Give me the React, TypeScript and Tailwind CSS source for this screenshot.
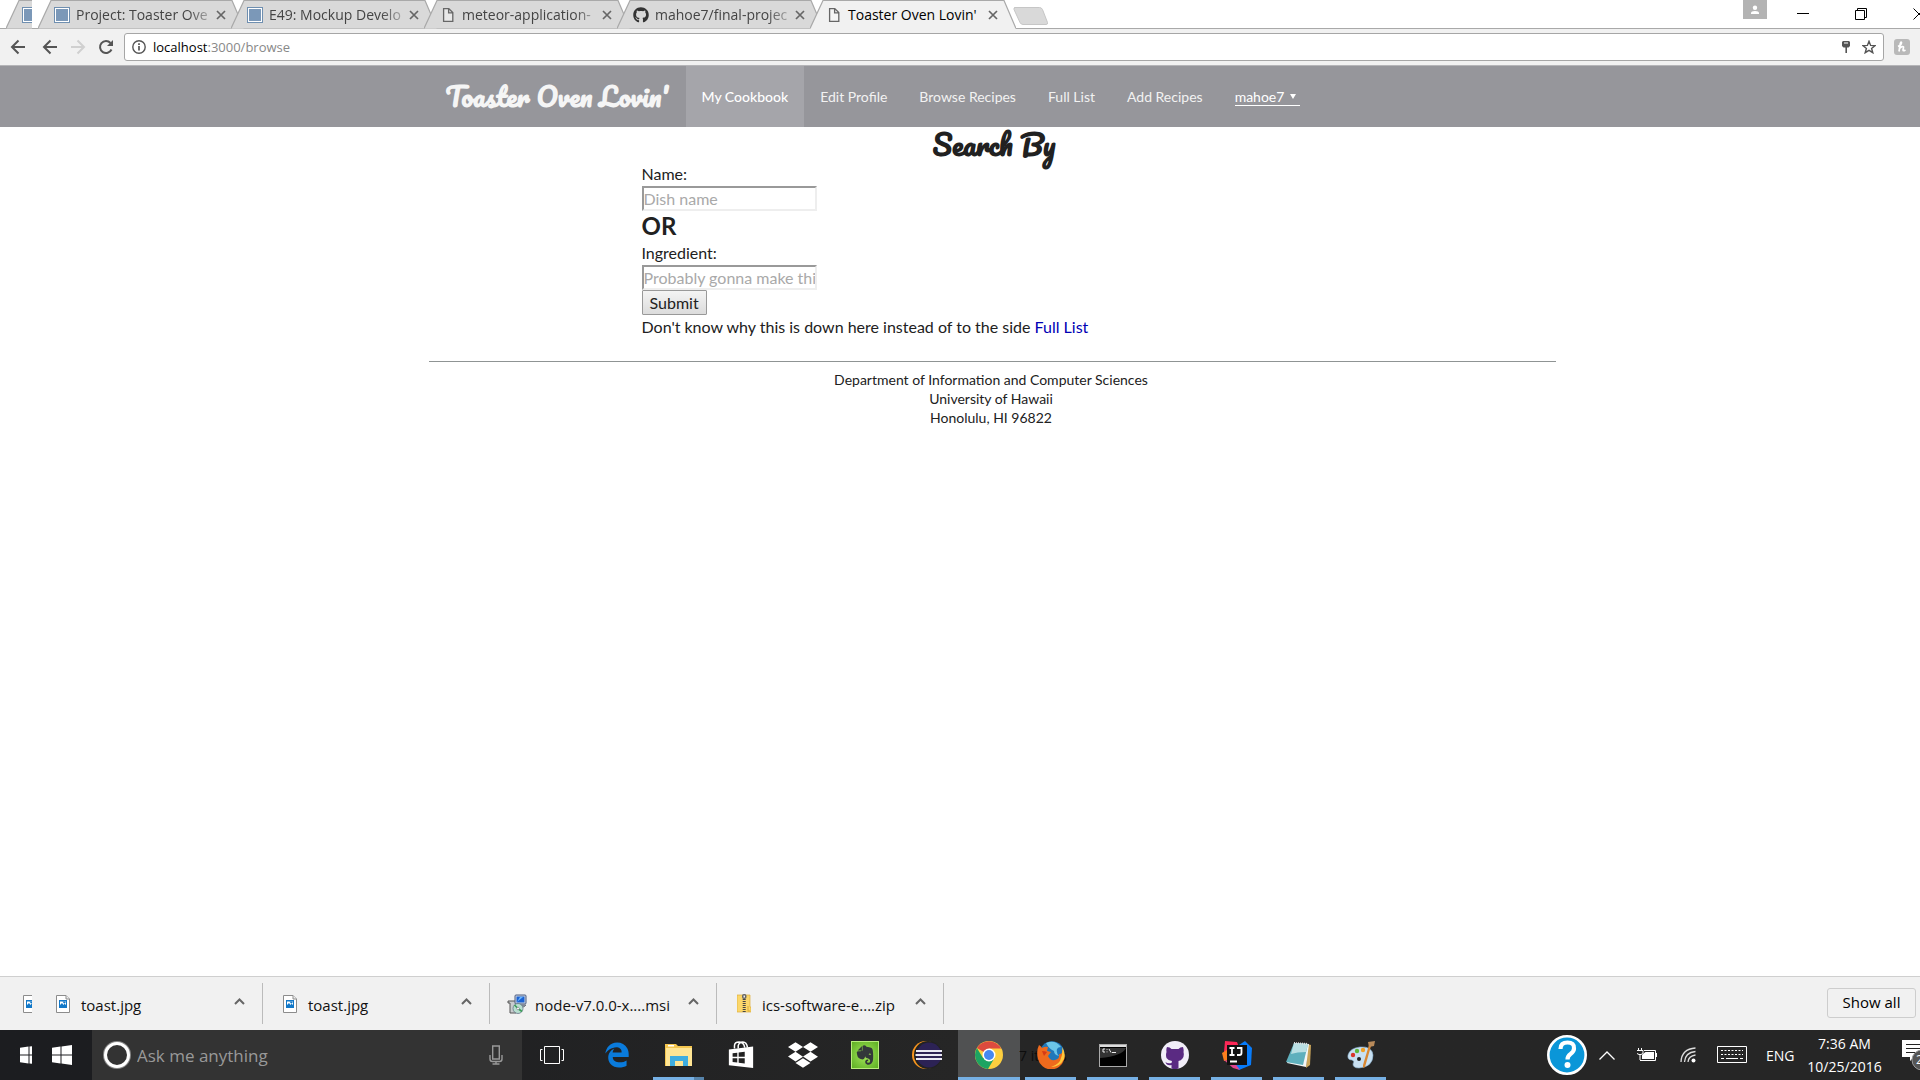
import React from "react";
import { FaGithub, FaDropbox, FaEdgeLegacy, FaEvernote } from "react-icons/fa";

const ui = "font-['Segoe_UI','Open_Sans',sans-serif]";

function SquareIcon() {
  return (
    <svg className="size-4 shrink-0" viewBox="0 0 16 16">
      <rect x=".5" y=".5" width="15" height="15" fill="#fff" stroke="#6f8fb0" />
      <rect x="2" y="2" width="12" height="12" fill="#7b98b8" />
    </svg>
  );
}

function PageIcon() {
  return (
    <svg className="size-4 shrink-0" viewBox="0 0 16 16" fill="#fff" fillOpacity=".4" stroke="#666" strokeWidth="1.3">
      <path d="M3.6 1.6h5.2l4 4v8.8H3.6zM8.6 1.8v4h4" />
    </svg>
  );
}

function TabShape({ active }: { active?: boolean }) {
  return (
    <svg className="absolute inset-0 size-full" viewBox="0 0 206 29" preserveAspectRatio="none">
      <path
        d={active ? "M0 28.5L13 .5H194L206 28.5V29H0z" : "M0 28.5L13 .5H194L206 28.5z"}
        fill={active ? "#f1f1f1" : "#d9d9d9"}
      />
      <path d="M0 28.5L13 .5H194L206 28.5" fill="none" stroke="#a9a9a9" strokeWidth="1.2" />
    </svg>
  );
}

function Tab({ icon, title, active }: { icon: React.ReactNode; title: string; active?: boolean }) {
  return (
    <div className={`relative -mr-[13px] h-[29px] w-[206px] shrink-0 ${active ? "z-10" : ""}`}>
      <TabShape active={active} />
      <div className="relative flex h-full items-center pr-[18px] pl-4">
        {icon}
        <button
          className={`ml-[6px] flex-1 text-left text-[14px] leading-5 whitespace-nowrap ${
            active ? "text-black" : "text-[#444] [mask-image:linear-gradient(to_right,#000_80%,transparent_102%)]"
          }`}
        >
          {title}
        </button>
        <button aria-label="Close tab" className="shrink-0">
          <svg className="size-[10px]" viewBox="0 0 10 10" stroke="#666" strokeWidth="1.7">
            <path d="M1 1l8 8M9 1L1 9" />
          </svg>
        </button>
      </div>
    </div>
  );
}

function Arrow({ color, flip }: { color: string; flip?: boolean }) {
  return (
    <svg className={`size-4 ${flip ? "rotate-180" : ""}`} viewBox="0 0 16 16" fill="none" stroke={color} strokeWidth="2">
      <path d="M15 8H2.5M8.5 1.5L2 8l6.5 6.5" />
    </svg>
  );
}

function BrowserTop() {
  return (
    <header className={`${ui} shrink-0`}>
      <div className="relative flex h-[29px] items-start overflow-hidden bg-white">
        <div className="absolute inset-x-0 bottom-0 h-px bg-[#a9a9a9]" />
        <div className="relative mr-[6px] ml-[6px] h-[29px] w-[26px] shrink-0 overflow-hidden">
          <div className="relative h-full w-[206px]">
            <TabShape />
            <div className="relative flex h-full items-center pl-4"><SquareIcon /></div>
          </div>
        </div>
        <Tab icon={<SquareIcon />} title="Project: Toaster Ove" />
        <Tab icon={<SquareIcon />} title="E49: Mockup Develo" />
        <Tab icon={<PageIcon />} title="meteor-application-" />
        <Tab icon={<FaGithub className="size-4 shrink-0 text-[#333]" />} title="mahoe7/final-projec" />
        <Tab icon={<PageIcon />} title="Toaster Oven Lovin'" active />
        <button aria-label="New tab" className="mt-[7px] ml-[10px]">
          <svg className="h-[18px] w-[36px]" viewBox="0 0 36 18">
            <path d="M1.500.5h25q2 0 3 2l5 13q.5 2-1.500 2H10q-2 0-3-2L1 2.500Q.5.500 2.500.500z" fill="#d9d9d9" stroke="#c6c6c6" />
          </svg>
        </button>
        <div className="ml-auto flex shrink-0 items-start">
          <button aria-label="Profile" className="mr-[30px] flex h-[19px] w-6 items-center justify-center bg-[#b3b3b3]">
            <svg className="h-[10px] w-[10px]" viewBox="0 0 10 10" fill="#fff">
              <circle cx="5" cy="2.800" r="2.200" />
              <path d="M1 9V8q0-2 4-2t4 2v1z" />
            </svg>
          </button>
          <button aria-label="Minimize" className="mt-[8px] mr-[46px]">
            <svg className="size-3" viewBox="0 0 12 12" stroke="#000"><path d="M0 5.500h12" /></svg>
          </button>
          <button aria-label="Restore" className="mt-[8px] mr-[46px]">
            <svg className="size-3" viewBox="0 0 12 12" fill="none" stroke="#000">
              <path d="M.5 2.500h9v9h-9zM2.500 2.500v-2h9v9h-2" />
            </svg>
          </button>
          <button aria-label="Close window" className="mt-[8px] -mr-[5px]">
            <svg className="size-3" viewBox="0 0 12 12" stroke="#000"><path d="M.5.5l11 11M11.500.5l-11 11" /></svg>
          </button>
        </div>
      </div>
      <div className="flex h-[37px] items-center border-b border-[#b5b5b8] bg-[#f1f1f1] pr-[10px] pl-[10px]">
        <button aria-label="Back"><Arrow color="#555" /></button>
        <button aria-label="Go back" className="ml-4"><Arrow color="#555" /></button>
        <button aria-label="Forward" className="ml-3"><Arrow color="#d0d0d0" flip /></button>
        <button aria-label="Reload" className="mr-[10px] ml-3">
          <svg className="size-4" viewBox="0 0 16 16" fill="none" stroke="#555" strokeWidth="2">
            <path d="M13.500 10.500A6 6 0 1 1 12.500 4" />
            <path d="M15 1v6H9z" fill="#555" stroke="none" />
          </svg>
        </button>
        <div className="flex h-7 flex-1 items-center rounded-[3px] border border-[#a6a6a6] bg-white pr-[7px] pl-[7px]">
          <svg className="size-[14px]" viewBox="0 0 14 14" fill="none" stroke="#555" strokeWidth="1.4">
            <circle cx="7" cy="7" r="6.200" />
            <path d="M7 6v4.500M7 3.300v1.600" strokeWidth="1.700" />
          </svg>
          <div className="ml-[7px] flex-1 text-[13px] leading-5 text-[#888]">
            <span className="text-black">localhost</span>:3000/browse
          </div>
          <svg className="mr-3 h-3 w-2" viewBox="0 0 8 12" fill="#555">
            <path d="M1 0h6l1 1v4L6.500 6.500H5V12H3.400V6.500H1.500L0 5V1zM2 1.500v1h4v-1z" fillRule="evenodd" />
          </svg>
          <button aria-label="Bookmark">
            <svg className="size-[14px]" viewBox="0 0 14 14" fill="none" stroke="#555" strokeWidth="1.400">
              <path d="M7 1.300l1.600 4.100 4.400.2-3.400 2.800 1.200 4.300L7 10.300l-3.800 2.400 1.200-4.300L1 5.600l4.400-.2z" />
            </svg>
          </button>
        </div>
        <button aria-label="Extension" className="ml-[10px]">
          <svg className="size-4" viewBox="0 0 16 16">
            <rect width="16" height="16" rx="3" fill="#b9b9b9" />
            <path d="M4 7.500Q7.500 6 7.500 3.500 7 2.300 6.300 4.500L5 12.500M5.600 9.500Q8.500 6.500 9.500 8 9.500 9 9 11q0 1.500 2.500 0" fill="none" stroke="#fff" strokeWidth="1.700" />
          </svg>
        </button>
      </div>
    </header>
  );
}

const navLinks = ["Edit Profile", "Browse Recipes", "Full List", "Add Recipes"];

function PageContent() {
  return (
    <main className="flex-1 overflow-hidden bg-white font-[Lato,sans-serif] text-[#212121]">
      <nav className="flex h-[61px] justify-center bg-[#96969b] pl-16 text-[14px] text-[#f2f2f2]">
        <div className="flex w-full max-w-[1125px] items-stretch">
          <a href="#home" className="flex w-64 items-center px-4 font-[Pacifico,Lato,cursive] text-[26px] font-bold whitespace-nowrap text-[#f5f5f5]">
            Toaster Oven Lovin'
          </a>
          <a href="#cookbook" className="flex items-center bg-[#a5a5aa] px-4 font-medium text-white">My Cookbook</a>
          {navLinks.map((l) => (
            <a key={l} href="#nav" className="flex items-center px-4">{l}</a>
          ))}
          <button className="flex items-center px-4 text-white">
            <span className="flex items-center border-y border-t-transparent border-b-white leading-4">
              mahoe7
              <svg className="mr-1 ml-[6px] h-[5px] w-[6px]" viewBox="0 0 6 5" fill="#fff"><path d="M0 0h6L3 5z" /></svg>
            </span>
          </button>
        </div>
      </nav>
      <div className="flex justify-center pl-16">
        <div className="w-full max-w-[1127px]">
          <div className="px-[213px]">
            <h1 className="flex h-9 items-center justify-center pl-1 font-[Pacifico,Lato,cursive] text-[28px] font-bold">Search By</h1>
            <form className="flex flex-col items-start text-[16px] leading-[22px]" onSubmit={(e) => e.preventDefault()}>
              <label htmlFor="dish" className="h-[23px]">Name:</label>
              <input
                id="dish"
                placeholder="Dish name"
                className="h-[25px] w-[175px] border-2 border-t-[#999] border-r-[#eee] border-b-[#eee] border-l-[#999] placeholder:text-[#a9a9a9]"
              />
              <h2 className="h-[31px] text-[24px] leading-[29px] font-bold">OR</h2>
              <label htmlFor="ingredient" className="h-[23px]">Ingredient:</label>
              <input
                id="ingredient"
                placeholder="Probably gonna make thi"
                className="h-[25px] w-[175px] border-2 border-t-[#999] border-r-[#eee] border-b-[#eee] border-l-[#999] placeholder:text-[#a9a9a9]"
              />
              <button className="h-[25px] rounded-[1px] border border-[#999] bg-linear-to-b from-[#f4f4f4] to-[#dcdcdc] px-[7px]">Submit</button>
            </form>
            <p className="pb-[2px] text-[16px] leading-[23px]">
              Don't know why this is down here instead of to the side{" "}
              <a href="#list" className="text-[#0000b4]">Full List</a>
            </p>
          </div>
          <footer className="mt-[21px] border-t border-[#8f9494] pt-2 pr-[2px] text-center text-[14px] leading-[19px]">
            <p>Department of Information and Computer Sciences</p>
            <p>University of Hawaii</p>
            <p>Honolulu, HI 96822</p>
          </footer>
        </div>
      </div>
    </main>
  );
}

function ImageFile() {
  return (
    <svg className="h-[18px] w-[14px] shrink-0" viewBox="0 0 14 18">
      <path d="M.5.5h9.500l3.500 3.500v13.500H.5z" fill="#fff" stroke="#8c8c8c" />
      <path d="M10 .5V4h3.500" fill="#eee" stroke="#8c8c8c" />
      <rect x="3" y="5" width="8" height="8" fill="#1278c8" />
      <path d="M4 6.500h6v3.500l-1.500-1.500-1 1.500L6 8l-2 2z" fill="#fff" />
      <path d="M6.500 6.500h3v1.500l-1.500.5z" fill="#1278c8" />
    </svg>
  );
}

function InstallerIcon() {
  return (
    <svg className="size-5 shrink-0" viewBox="0 0 20 20">
      <path d="M1 7h8v12H3V9H1z" fill="#c9ccce" stroke="#555" />
      <rect x="8" y="1" width="11" height="9" rx="1" fill="#cfd6df" stroke="#4a5a80" />
      <rect x="9.500" y="2.500" width="8" height="6" fill="#1b62d4" />
      <path d="M10 8l3-5h3z" fill="#69b7ff" />
      <path d="M11 11h8l-2 2h-6z" fill="#9aa2ab" stroke="#4b5260" strokeWidth=".6" />
      <circle cx="11" cy="14.500" r="5" fill="#b8dfd0" stroke="#678" strokeWidth=".8" />
      <path d="M11 14.500l4 3M11 14.500L7.500 11" stroke="#3c9c58" strokeWidth="1.600" />
      <circle cx="11" cy="14.500" r="1.300" fill="#fff" stroke="#667" strokeWidth=".5" />
    </svg>
  );
}

function ZipIcon() {
  return (
    <svg className="h-[19px] w-[14px] shrink-0" viewBox="0 0 14 19">
      <path d="M0 1h13v12h1v5H0z" fill="#fbd76b" stroke="#dcae3b" strokeWidth=".7" />
      <rect x="5" width="4.500" height="5" rx="2" fill="#666" />
      <rect x="6.500" y="1.500" width="1.500" height="2" fill="#eee" />
      <path d="M7.200 5v13" stroke="#444" strokeWidth="3" strokeDasharray="1 1" />
      <path d="M11 12v5h2" fill="none" stroke="#dcae3b" />
    </svg>
  );
}

const downloads = [
  { name: "toast.jpg", icon: <ImageFile /> },
  { name: "toast.jpg", icon: <ImageFile /> },
  { name: "node-v7.0.0-x....msi", icon: <InstallerIcon /> },
  { name: "ics-software-e....zip", icon: <ZipIcon /> },
];

function DownloadShelf() {
  return (
    <section className={`${ui} flex h-[54px] shrink-0 items-center border-t border-[#cfcfcf] bg-[#f1f1f1] pr-1 pl-[23px]`}>
      <div className="w-[9px] overflow-hidden"><ImageFile /></div>
      <div className="flex h-[41px] pl-1">
        {downloads.map((d, i) => (
          <div key={i} className="flex w-[227px] items-center border-r border-[#bbb] pr-[17px] pl-[13px]">
            <div className="flex w-7 shrink-0 justify-center">{d.icon}</div>
            <button className="ml-1 flex-1 pt-[3px] text-left text-[15px] leading-6 whitespace-nowrap text-[#111]">{d.name}</button>
            <button aria-label={`Options for ${d.name}`} className="mb-1 w-[11px] shrink-0">
              <svg className="h-[7px] w-[11px]" viewBox="0 0 11 7" fill="none" stroke="#666" strokeWidth="2"><path d="M1 6l4.500-4.500L10 6" /></svg>
            </button>
          </div>
        ))}
      </div>
      <button className="mb-[2px] ml-auto h-[30px] w-[89px] rounded-[3px] border border-[#cdcdcd] text-[15px] text-black">Show all</button>
    </section>
  );
}

function WindowsLogo() {
  return (
    <svg className="size-5 shrink-0" viewBox="0 0 20 20" fill="#fff">
      <path d="M0 2.800L8.500 1.600V9.500H0zM9.500 1.500L20 0v9.500H9.500zM0 10.500h8.500v7.900L0 17.200zM9.500 10.500H20V20L9.500 18.500z" />
    </svg>
  );
}

function FolderIcon() {
  return (
    <svg className="size-7" viewBox="0 0 28 28">
      <path d="M0 3h11l2 2h14v20H0z" fill="#f4c64f" />
      <path d="M1 7h26v18H1z" fill="#ffe594" />
      <rect x="3" y="4" width="6" height="1.500" fill="#fff" />
      <path d="M5 25V15h18v10h-5v-5h-8v5z" fill="#3faddf" />
    </svg>
  );
}
function StoreIcon() {
  return (
    <svg className="size-7" viewBox="0 0 28 30">
      <path d="M1 9l26-3v23L1 26z" fill="#fff" />
      <path d="M7 8V5q0-4 5-4t6 6M11 8V5q1-4 5-4t5 6" fill="none" stroke="#fff" strokeWidth="1.600" />
      <path d="M5 13l5-.5v4.500H5zM11.500 12.300l6.500-.8V17h-6.500zM5 18.500h5v4.500l-5-.5zM11.500 18.500H18v5.500l-6.500-.8z" fill="#222" />
    </svg>
  );
}
function EvernoteIcon() {
  return (
    <div className="flex size-7 items-center justify-center border border-[#b8ee7b] bg-radial from-[#a5e85a] to-[#5cae21]">
      <FaEvernote className="size-[22px] text-[#33383a]" />
    </div>
  );
}
function EclipseIcon() {
  return (
    <svg className="h-7 w-[30px]" viewBox="0 0 30 28">
      <circle cx="14" cy="14" r="14" fill="#f7941e" />
      <circle cx="16" cy="14" r="14" fill="#222" />
      <circle cx="17" cy="14" r="12.500" fill="#2c2255" />
      <path d="M4 10h26M3.500 14h26.500M4 18h26" stroke="#e9e9f4" strokeWidth="2" />
    </svg>
  );
}
function ChromeIcon() {
  return (
    <svg className="size-7" viewBox="0 0 28 28">
      <circle cx="14" cy="14" r="14" fill="#fdcf3f" />
      <path d="M14 14L1.900 7A14 14 0 0 1 26.100 7.500H14z" fill="#dd4b3e" />
      <path d="M1.900 7A14 14 0 0 0 13 28l6.500-11H8z" fill="#1da462" />
      <circle cx="14" cy="14" r="6.500" fill="#fff" />
      <circle cx="14" cy="14" r="5" fill="#4688f1" />
    </svg>
  );
}
function FirefoxIcon() {
  return (
    <svg className="size-7" viewBox="0 0 28 28">
      <circle cx="15" cy="12.500" r="12.300" fill="#2077ba" />
      <path d="M9 2q9-4 15 4-3 0-4 2-1 4 2 7-5-1-5-5-5-2-8-8z" fill="#6cc5e8" />
      <path d="M2 4q2 1 3 3 3-2 6-1l-1 4 4 1-3 4q2 5 7 4 5-1 4-6 4 1 3-5 4 6 2 11A13.500 13.500 0 0 1 1 18Q-1 10 2 4z" fill="#ee6a1d" />
      <path d="M25 6q4 6 2 12-4 8-13 8 9-3 10-9 2-5 1-11z" fill="#ffc93a" />
      <path d="M5 10q3 0 5 1l-3 4z" fill="#d53b16" />
    </svg>
  );
}
function TerminalIcon() {
  return (
    <svg className="h-[23px] w-7" viewBox="0 0 28 23">
      <rect x=".5" y=".5" width="27" height="22" fill="#000" stroke="#aaa" />
      <path d="M1 2h26" stroke="#ddd" strokeWidth="2" />
      <path d="M1 4h26q-4 8-26 10z" fill="#333" />
      <path d="M6 5H4v3h2M8 5v.8M8 7.500v.8M10 5l2 3.500M13 8.500h4" fill="none" stroke="#eee" />
    </svg>
  );
}
function GithubIcon() {
  return (
    <svg className="size-7" viewBox="0 0 28 28">
      <circle cx="14" cy="14" r="14" fill="#f1eef8" />
      <path d="M6 6q3 0 4.500 2h7Q19 6 22 6q1 3 .5 5 1 4-1 6.500-1.500 2-4 2.500V27.500q-4 1-7 0V24q-5 1-6-3 2 2 6 1l.5-2q-4-.5-5.500-3Q4.500 14 5.500 11 5 8 6 6z" fill="#5a2a82" />
    </svg>
  );
}
function IntellijIcon() {
  return (
    <svg className="h-[30px] w-[30px]" viewBox="0 0 30 30">
      <path d="M3 1l12 1 3 8-12 8-4-6z" fill="#fe2857" />
      <path d="M0 13l8-5 3 12-9 1z" fill="#fc801d" />
      <path d="M17 5l6-4 7 7-1 17-12 5-6-6z" fill="#087cfa" />
      <path d="M2 20l10 2 6 8-7-2z" fill="#e0458f" />
      <rect x="5" y="5" width="20" height="20" fill="#111" />
      <path d="M7.500 8h5M10 8v7M7.500 15h5M15 8h4.500v5q0 2-2 2H15M8 21.500h7" fill="none" stroke="#fff" strokeWidth="1.800" />
    </svg>
  );
}
function NotepadIcon() {
  return (
    <svg className="size-7" viewBox="0 0 28 28">
      <path d="M22 3l4 1-1 20-4 3z" fill="#c9a45a" />
      <path d="M10 2l14 1-3 23-19-4z" fill="#f4f6f6" />
      <path d="M9 2l14 1-5 21L1 21z" fill="#5fb0bd" />
      <path d="M9 2l14 1-2 8q-9 0-15 2z" fill="#b9dfe3" />
      <path d="M9 2l14 1" stroke="#ddd" strokeWidth="2" strokeDasharray="1 1" />
    </svg>
  );
}
function PaintIcon() {
  return (
    <svg className="size-7" viewBox="0 0 28 28">
      <path d="M13 6q12-1 13 8 0 12-14 13-6 0-6-4 2-3-1-4-5 0-4-5 2-7 12-8z" fill="#c8e0f2" stroke="#89b1cf" strokeWidth=".6" />
      <circle cx="6" cy="14" r="2.200" fill="#d9372c" />
      <circle cx="10" cy="10" r="2.200" fill="#5fb83c" />
      <circle cx="16" cy="9" r="2.200" fill="#f1a127" />
      <circle cx="12" cy="18" r="2" fill="#222" />
      <path d="M24 5l-6 21-2 1v-3l6-20z" fill="#d98732" />
      <path d="M21 1l7-1-1 5-5 1z" fill="#b88a5a" />
    </svg>
  );
}

const apps: { name: string; icon: React.ReactNode; state: "idle" | "open" | "stacked" | "focused" }[] = [
  { name: "Edge", icon: <FaEdgeLegacy className="size-[26px] text-[#0a7bdc]" />, state: "idle" },
  { name: "File Explorer", icon: <FolderIcon />, state: "stacked" },
  { name: "Store", icon: <StoreIcon />, state: "idle" },
  { name: "Dropbox", icon: <FaDropbox className="size-[30px] text-white" />, state: "idle" },
  { name: "Evernote", icon: <EvernoteIcon />, state: "idle" },
  { name: "Eclipse", icon: <EclipseIcon />, state: "idle" },
  { name: "Chrome", icon: <ChromeIcon />, state: "focused" },
  { name: "Firefox", icon: <FirefoxIcon />, state: "open" },
  { name: "Command Prompt", icon: <TerminalIcon />, state: "open" },
  { name: "GitHub", icon: <GithubIcon />, state: "open" },
  { name: "IntelliJ IDEA", icon: <IntellijIcon />, state: "open" },
  { name: "Notepad", icon: <NotepadIcon />, state: "open" },
  { name: "Paint", icon: <PaintIcon />, state: "open" },
];

function Taskbar() {
  return (
    <footer className={`${ui} flex h-[50px] shrink-0 items-stretch overflow-hidden bg-linear-to-r from-[#1c1d20] from-5% to-[#262626] to-50% text-white`}>
      <div className="flex w-[92px] shrink-0 items-center pl-5">
        <div className="w-3 overflow-hidden"><WindowsLogo /></div>
        <button aria-label="Start" className="ml-5"><WindowsLogo /></button>
      </div>
      <div className="flex w-[430px] shrink-0 items-center bg-[#333] pr-[19px] pl-[11px]">
        <svg className="size-7 shrink-0" viewBox="0 0 28 28" fill="none">
          <circle cx="14" cy="14" r="13" stroke="#888" strokeWidth="2" />
          <circle cx="14" cy="14" r="11.500" stroke="#fff" strokeWidth="3" />
        </svg>
        <input aria-label="Search" placeholder="Ask me anything" className="ml-[6px] min-w-0 flex-1 pt-[2px] text-[17px] placeholder:text-[#999]" />
        <button aria-label="Voice search">
          <svg className="h-5 w-[14px]" viewBox="0 0 14 20" fill="none" stroke="#999" strokeWidth="1.400">
            <path d="M3.700 1h6.600v13H3.700zM1 10v4q0 2.500 2.500 2.500h7Q13 16.500 13 14v-4M7 16.500V19M3.500 19h7" />
          </svg>
        </button>
      </div>
      <button aria-label="Task view" className="flex w-16 shrink-0 items-center justify-center pr-1">
        <svg className="h-[18px] w-6" viewBox="0 0 24 18" fill="none" stroke="#fff">
          <path d="M4.500.5h15v17h-15zM2.500 3.500h-2v11h2M21.500 3.500h2v11h-2" />
        </svg>
      </button>
      <div className="flex shrink-0">
        {apps.map((a) => (
          <button key={a.name} aria-label={a.name} className={`relative flex w-[62px] items-center justify-center ${a.state === "focused" ? "bg-[#505152]" : ""}`}>
            {a.name === "Firefox" && <span className="absolute top-[14px] -left-px text-[14px] leading-6 whitespace-nowrap text-[#0d0d0d]">7 items</span>}
            <span className="relative">{a.icon}</span>
            {a.state === "open" && <span className="absolute bottom-0 left-[5px] h-[3px] w-[51px] bg-[#76b0e4]" />}
            {a.state === "focused" && <span className="absolute inset-x-0 bottom-0 h-[3px] bg-[#76b0e4]" />}
            {a.state === "stacked" && (
              <span className="absolute bottom-0 left-[5px] flex h-[3px] w-[51px] bg-[#76b0e4]">
                <span className="ml-auto w-[10px] bg-[#5784ab]" />
              </span>
            )}
          </button>
        ))}
      </div>
      <div className="ml-auto flex shrink-0 items-center">
        <button aria-label="Help" className="mr-3">
          <svg className="size-10" viewBox="0 0 40 40" fill="none">
            <circle cx="20" cy="20" r="18.700" fill="#0a96d8" stroke="#fff" strokeWidth="2.600" />
            <path d="M13.500 14q0-6.500 7-6.500t6.500 6q0 3-3.500 5.500-3 2-3 5.500" stroke="#fff" strokeWidth="4.200" />
            <circle cx="20.500" cy="30" r="3" fill="#fff" />
          </svg>
        </button>
        <svg className="mr-[22px] h-[9px] w-4" viewBox="0 0 16 9" fill="none" stroke="#fff" strokeWidth="1.300"><path d="M.5 8.500L8 1l7.500 7.500" /></svg>
        <svg className="mr-[23px] h-[14px] w-5" viewBox="0 0 20 14" fill="none" stroke="#fff">
          <path d="M1.500 0v3M4.500 0v3M0 2.500h6v3L4 6.500H2L0 5.500M3 6.500v5.500M7 2.500h11.500v10H3M19.500 5v4" />
          <path d="M6.500 5.500l2-1.500h8.500v7H5V7z" fill="#fff" stroke="none" />
        </svg>
        <svg className="mr-[21px] size-4" viewBox="0 0 16 16" fill="none" stroke="#ddd" strokeWidth="1.300">
          <path d="M1 15Q1.500 2 15.500 1M4.500 15Q5 5.500 15.500 4.500M8 15Q8.500 9 15.500 8" />
          <circle cx="13.500" cy="13.500" r="2" fill="#fff" stroke="none" />
        </svg>
        <svg className="mr-[19px] h-[18px] w-[30px]" viewBox="0 0 30 18" fill="none" stroke="#fff">
          <path d="M.5.500h29v16H.5z" />
          <path d="M4 4.500h22M4 8.500h22" strokeDasharray="2 1.500" />
          <path d="M4 12.500h3M9 12.500h12M23 12.500h3" />
        </svg>
        <span className="mr-[14px] w-[27px] text-[14px]">ENG</span>
        <div className="w-[75px] text-center text-[14px] leading-[23px]">
          <div>7:36 AM</div>
          <div>10/25/2016</div>
        </div>
        <div className="relative ml-5 h-[30px] w-[18px] overflow-hidden">
          <svg className="absolute top-0 left-0 h-[30px] w-[30px]" viewBox="0 0 30 30">
            <path d="M0 0h22v17H12l-4 4v-4H0z" fill="#fff" />
            <path d="M4 4.500h14M4 8.500h14M4 12.500h14" stroke="#222" />
            <circle cx="20" cy="20" r="10" fill="#555" stroke="#999" />
          </svg>
          <span className="absolute top-[12px] left-[14px] text-[12px] leading-4">2</span>
        </div>
      </div>
    </footer>
  );
}

export default function App() {
  return (
    <div className="flex h-screen flex-col overflow-hidden bg-white">
      <BrowserTop />
      <PageContent />
      <DownloadShelf />
      <Taskbar />
    </div>
  );
}
